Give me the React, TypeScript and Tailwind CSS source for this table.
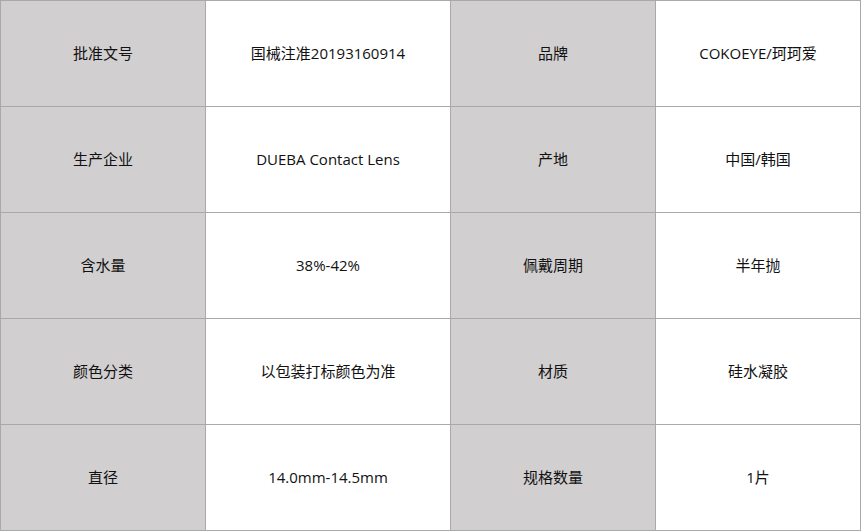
const rows: [string, string, string, string][] = [
  ["批准文号", "国械注准20193160914", "品牌", "COKOEYE/珂珂爱"],
  ["生产企业", "DUEBA Contact Lens", "产地", "中国/韩国"],
  ["含水量", "38%-42%", "佩戴周期", "半年抛"],
  ["颜色分类", "以包装打标颜色为准", "材质", "硅水凝胶"],
  ["直径", "14.0mm-14.5mm", "规格数量", "1片"],
];

export default function App() {
  return (
    <div className="bg-white w-[862px] h-[532px]">
      <div
        className="grid w-[861px] grid-cols-[204px_244px_204px_204px] auto-rows-[105px] gap-px bg-[#a9a9a9] p-px text-[15px] text-[#111]"
        style={{ fontFamily: '"Open Sans", "Noto Sans CJK SC", sans-serif' }}
      >
        {rows.map((r, i) =>
          r.map((cell, j) => (
            <div
              key={i + "-" + j}
              className={
                "flex items-center justify-center " +
                (j % 2 === 0 ? "bg-[#d1cfd0]" : "bg-white")
              }
            >
              {cell}
            </div>
          ))
        )}
      </div>
    </div>
  );
}
